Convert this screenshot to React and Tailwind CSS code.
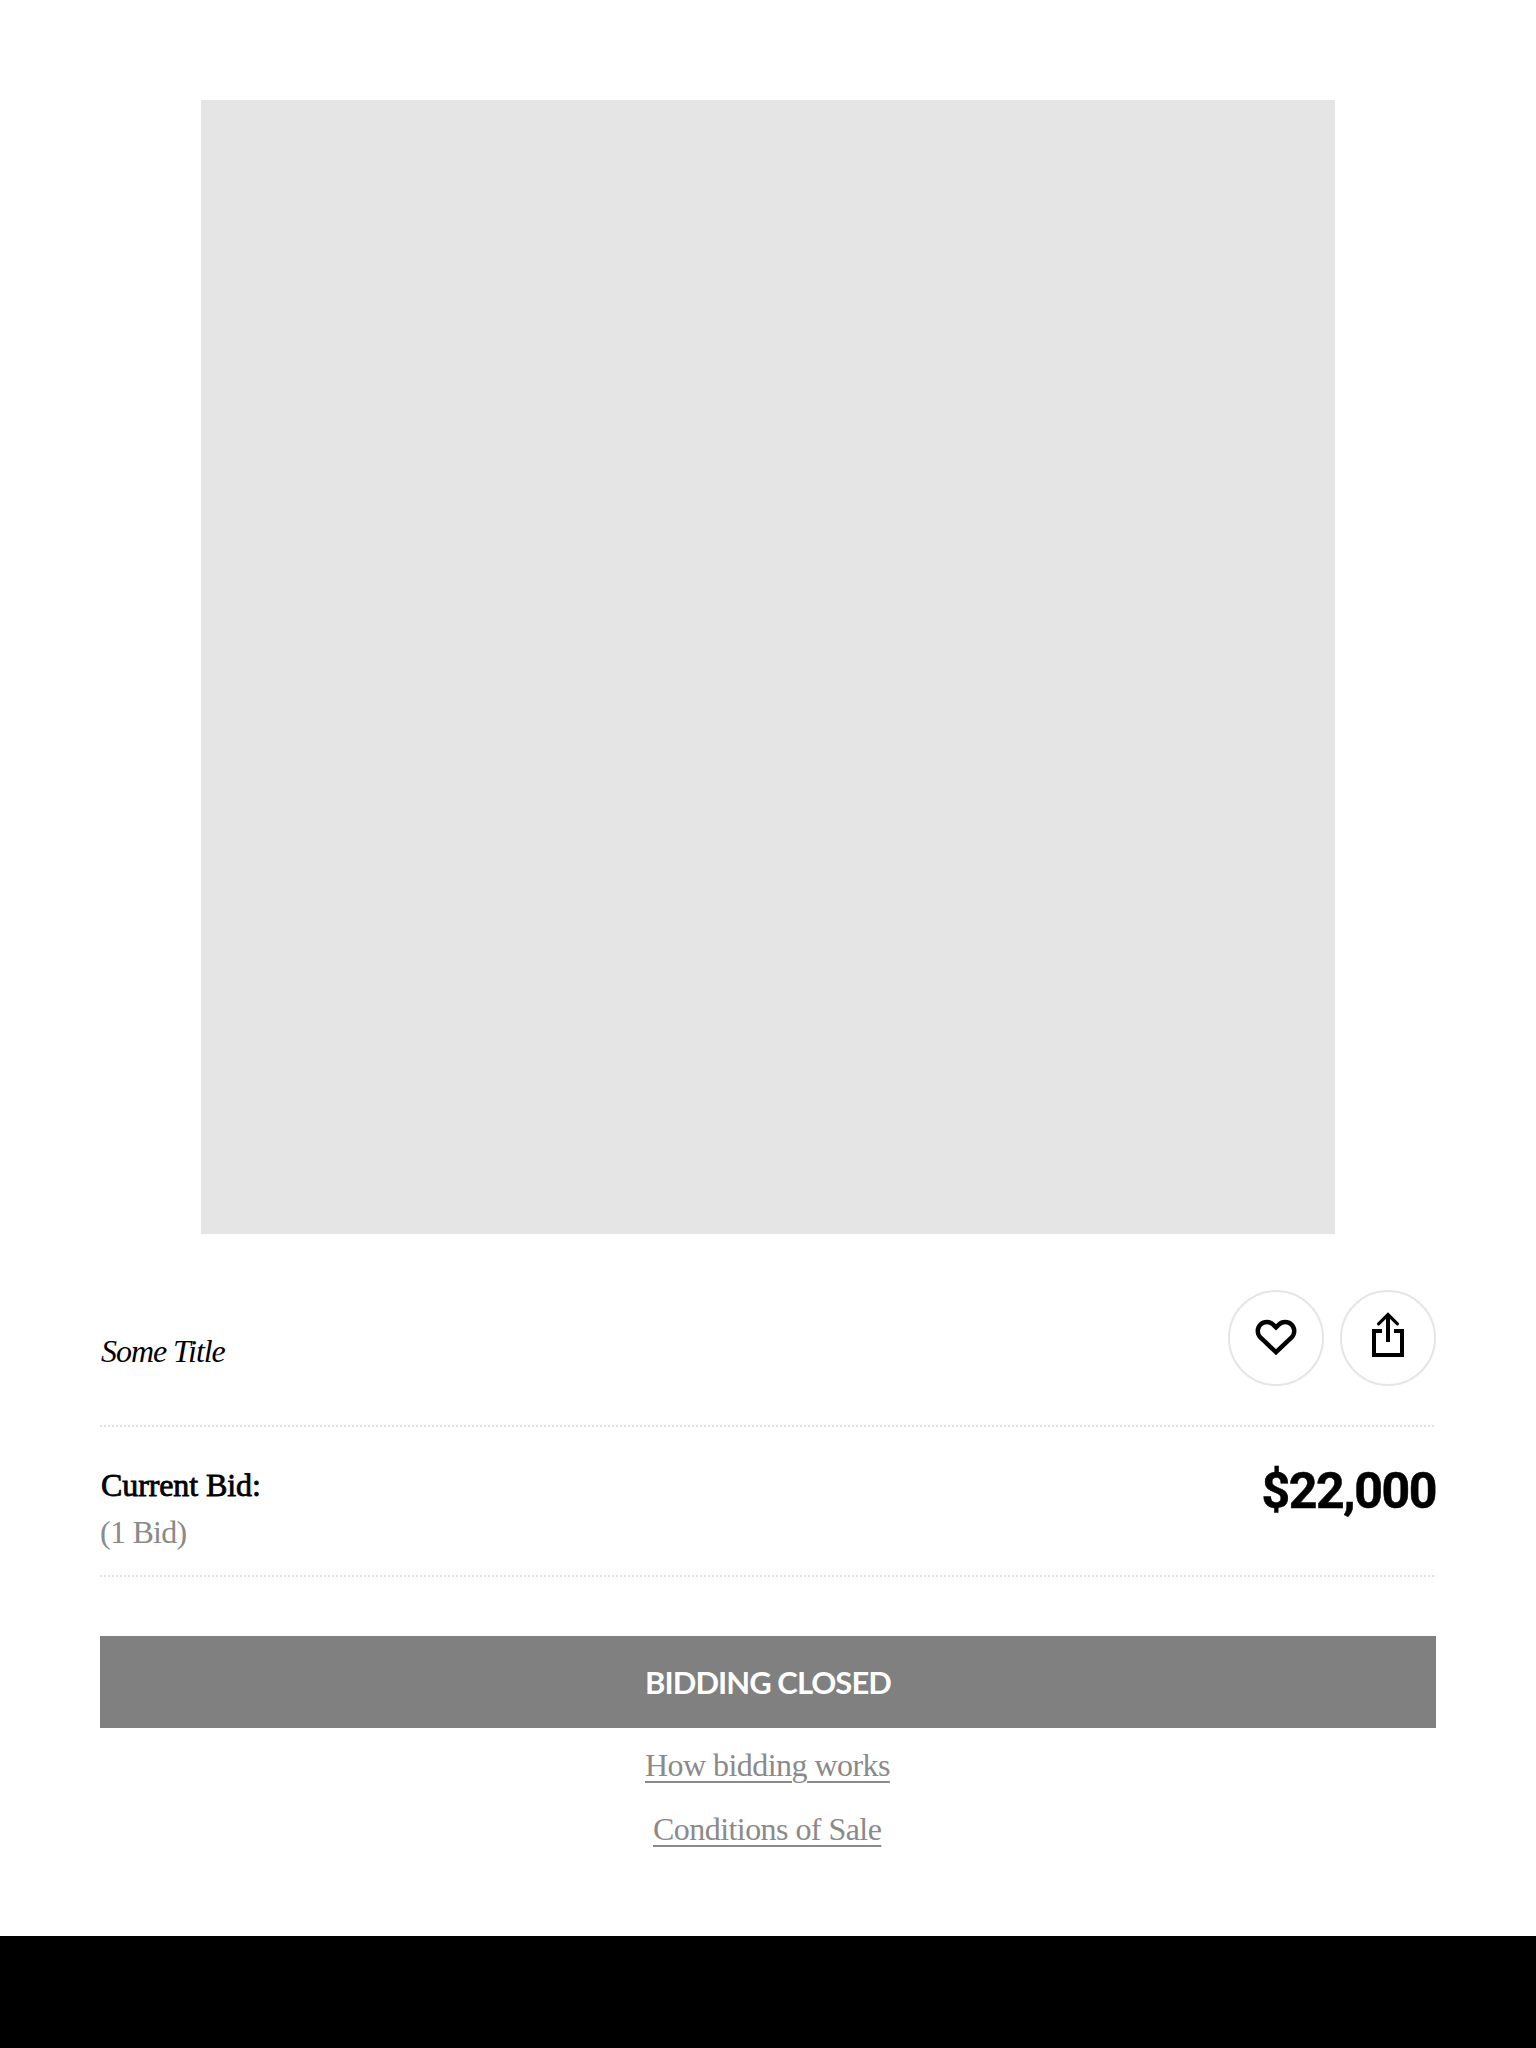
const serif = "font-['Liberation_Serif','Times_New_Roman',serif]";

function DottedRule() {
  return (
    <div className="h-[2px] w-[1334px] bg-[repeating-linear-gradient(to_right,#e2e2e2_0_2px,transparent_2px_4px)]" />
  );
}

function IconButton({ label, children }) {
  return (
    <button
      aria-label={label}
      className="flex size-24 items-center justify-center rounded-full border-2 border-[#e5e5e5]"
    >
      <svg viewBox="0 0 96 96" className="size-24 shrink-0" fill="none" stroke="#000">
        {children}
      </svg>
    </button>
  );
}

export default function App() {
  return (
    <div className={`flex h-[2048px] w-[1536px] flex-col bg-white text-[32px] leading-[48px] text-black ${serif}`}>
      <main className="flex h-[1936px] flex-col px-[100px] pt-[100px]">
        <div className="ml-[101px] size-[1134px] shrink-0 bg-[#e5e5e5]" />

        <div className="mt-14 flex h-24 justify-between">
          <h1 className="mt-[37px] ml-px tracking-[-1.05px] whitespace-nowrap italic">Some Title</h1>
          <div className="flex gap-4">
            <IconButton label="Save">
              <path
                d="M48 37.4 45.2 34.6A9 9 0 0 0 32.4 47.4L48 62.2 63.6 47.4A9 9 0 0 0 50.8 34.6Z"
                strokeWidth="4.4"
              />
            </IconButton>
            <IconButton label="Share">
              <path d="M42 41H34V65H62V41H54M48 24V52" strokeWidth="4" />
              <path d="M38.6 33.8 48 24.6 57.4 33.8" strokeWidth="3.2" strokeLinecap="round" />
            </IconButton>
          </div>
        </div>

        <div className="mt-[39px]">
          <DottedRule />
        </div>
        <div className="flex h-[148px] justify-between">
          <div className="pt-[34px]">
            <p className="ml-px tracking-[-0.1px] whitespace-nowrap [-webkit-text-stroke:0.8px_#000]">Current Bid:</p>
            <p className="-mt-px whitespace-nowrap tracking-[-0.75px] text-[#8a8a8a]">(1 Bid)</p>
          </div>
          <p className="pt-[34px] font-[Roboto,sans-serif] text-[50px] leading-[60px] font-bold tracking-[-1.4px] whitespace-nowrap [-webkit-text-stroke:0.5px_#000]">
            $22,000
          </p>
        </div>
        <DottedRule />

        <button className="mt-[59px] h-[92px] w-full shrink-0 bg-[#808080] font-[Lato,sans-serif] text-[31px] leading-[93px] font-bold tracking-[-0.95px] whitespace-nowrap text-white">
          BIDDING CLOSED
        </button>
        <nav className="flex flex-col items-center gap-4 pt-[13px] text-[#8a8a8a]">
          <a className="w-[246px] tracking-[-0.55px] whitespace-nowrap underline decoration-2 underline-offset-[5px]">How bidding works</a>
          <a className="w-[230px] tracking-[-0.55px] whitespace-nowrap underline decoration-2 underline-offset-[5px]">Conditions of Sale</a>
        </nav>
      </main>
      <footer className="h-28 bg-black" />
    </div>
  );
}
